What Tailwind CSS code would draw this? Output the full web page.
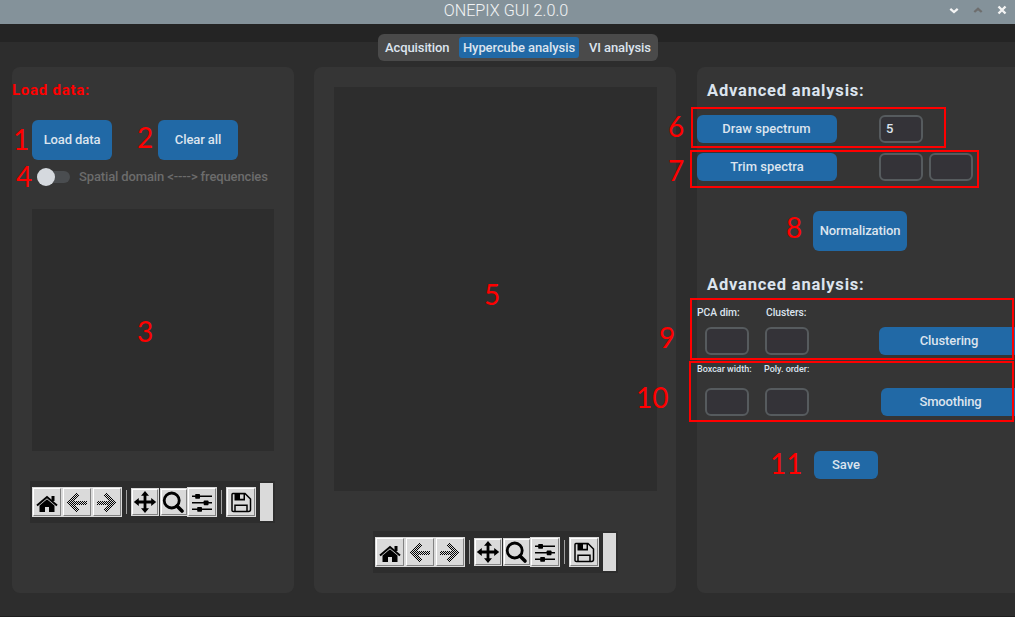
<!DOCTYPE html>
<html lang="en">
<head>
<meta charset="utf-8">
<title>ONEPIX GUI 2.0.0</title>
<script src="https://cdn.jsdelivr.net/npm/@tailwindcss/browser@4"></script>
</head>
<body class="relative flex h-[617px] w-[1015px] flex-col overflow-hidden bg-[#2d2d2d] font-['Roboto',sans-serif] text-[13px] font-medium text-[#dce4ee]">
<header class="grid h-6 shrink-0 grid-cols-[1fr_auto_1fr] items-center bg-[#84929a] pr-[7px]">
  <span></span>
  <h1 class="-translate-x-px -translate-y-px text-[16.2px] leading-none font-light text-white/90"><span class="ml-[6px]">ONEPIX GUI 2.0.0</span></h1>
  <div class="flex items-center justify-end gap-[13px] -mt-[4px]">
    <svg class="h-[10px] w-[11px]" viewBox="0 0 11 10" fill="none" stroke="#f4f4f4" stroke-width="2.3"><path d="M1.300 3.800 5 7 8.700 3.800"/></svg>
    <svg class="h-[10px] w-[11px]" viewBox="0 0 11 10" fill="none" stroke="#6e6e6e" stroke-width="2.3"><path d="M1.300 7 5 3.800 8.700 7"/></svg>
    <svg class="h-[10px] w-[11px]" viewBox="0 0 11 10" fill="none" stroke="#f4f4f4" stroke-width="2.4"><path d="M1.500 1.500 8.500 8.500M8.500 1.500 1.500 8.500"/></svg>
  </div>
</header>
<div class="h-[18px] shrink-0 bg-[#242424]"></div>
<nav class="z-10 -mt-2 ml-[378px] flex h-[27px] w-[280px] shrink-0 items-center rounded-[6px] bg-[#4a4a4a] leading-none">
  <span class="w-[81px] pl-[7px] tracking-[-0.1px]">Acquisition</span>
  <span class="flex h-[21px] w-[120px] items-center justify-center rounded-[3px] bg-[#2169a6] tracking-[-0.08px]">Hypercube analysis</span>
  <span class="flex-1 pl-[10px] tracking-[-0.1px]">VI analysis</span>
</nav>
<main class="mt-[6px] flex h-[526px] shrink-0">
  <section class="ml-3 flex w-[282px] shrink-0 flex-col rounded-lg bg-[#353535]">
    <h2 class="mt-[14px] h-[18px] text-[15px] leading-[18px] font-bold tracking-[0.75px] text-[#ff0000]">Load data:</h2>
    <div class="mt-[21px] ml-5 flex gap-[46px]">
      <button class="h-10 w-20 rounded-[6px] bg-[#2169a6] tracking-[-0.1px]">Load data</button>
      <button class="h-10 w-20 rounded-[6px] bg-[#2169a6] tracking-[-0.1px]">Clear all</button>
    </div>
    <div class="mt-[8px] ml-[25px] flex h-[18px] items-center text-[#6c6c6c]">
      <span class="flex h-3 w-[33px] items-center rounded-full bg-[#4a4d50]"><i class="size-[18px] rounded-full bg-[#d5d9de]"></i></span>
      <span class="ml-[9px] tracking-[-0.13px] whitespace-nowrap">Spatial domain &lt;----&gt; frequencies</span>
    </div>
    <div class="mt-[23px] ml-5 h-[242px] w-[242px] bg-[#2d2d2d]"></div>
    <div class="toolbar mt-[30px] ml-[18px]"></div>
  </section>
  <section class="ml-5 flex w-[362px] shrink-0 flex-col rounded-lg bg-[#353535]">
    <div class="mt-5 ml-5 h-[404px] w-[323px] bg-[#2d2d2d]"></div>
    <div class="toolbar mt-10 ml-[59px]"></div>
  </section>
  <section class="ml-[21px] flex w-[340px] shrink-0 flex-col rounded-lg bg-[#353535]">
    <h2 class="mt-[15px] ml-[10px] h-[18px] text-[16.5px] leading-[18px] font-bold tracking-[0.8px]">Advanced analysis:</h2>
    <div class="mt-[15px] flex h-7">
      <button class="w-[140px] rounded-[6px] bg-[#2169a6] pr-px tracking-[0.04px]">Draw spectrum</button>
      <span class="ml-[42px] flex w-11 items-center rounded-[6px] border-2 border-[#565b5e] bg-[#343338] pl-[5px]">5</span>
    </div>
    <div class="mt-[10px] flex h-7">
      <button class="w-[140px] rounded-[6px] bg-[#2169a6]">Trim spectra</button>
      <span class="ml-[42px] w-11 rounded-[6px] border-2 border-[#565b5e] bg-[#343338]"></span>
      <span class="ml-[6px] w-11 rounded-[6px] border-2 border-[#565b5e] bg-[#343338]"></span>
    </div>
    <button class="mt-[30px] ml-[116px] h-10 w-[94px] rounded-[6px] bg-[#2169a6] tracking-[-0.1px]">Normalization</button>
    <h2 class="mt-[25px] ml-[10px] h-[18px] text-[16.5px] leading-[18px] font-bold tracking-[0.8px]">Advanced analysis:</h2>
    <div class="mt-[13px] flex h-3 text-[10.3px] leading-3 whitespace-nowrap">
      <span class="w-[69px]">PCA dim:</span><span class="tracking-[-0.05px]">Clusters:</span>
    </div>
    <div class="mt-[8px] ml-2 flex h-7">
      <span class="w-11 rounded-[6px] border-2 border-[#565b5e] bg-[#343338]"></span>
      <span class="ml-4 w-11 rounded-[6px] border-2 border-[#565b5e] bg-[#343338]"></span>
      <button class="ml-[70px] w-[140px] rounded-[6px] bg-[#2169a6] tracking-[-0.1px]">Clustering</button>
    </div>
    <div class="mt-2 flex h-3 text-[9px] leading-3 whitespace-nowrap">
      <span class="w-[67px]">Boxcar width:</span><span>Poly. order:</span>
    </div>
    <div class="mt-[13px] ml-2 flex h-7">
      <span class="w-11 rounded-[6px] border-2 border-[#565b5e] bg-[#343338]"></span>
      <span class="ml-4 w-11 rounded-[6px] border-2 border-[#565b5e] bg-[#343338]"></span>
      <button class="ml-[72px] w-[139px] rounded-[6px] bg-[#2169a6] tracking-[-0.15px]">Smoothing</button>
    </div>
    <button class="mt-[35px] ml-[117px] h-7 w-16 rounded-[6px] bg-[#2169a6]">Save</button>
  </section>
</main>
<div class="mt-[23px] h-px shrink-0 bg-[#1e1e1e]"></div>

<!-- Numbered callouts over the window -->
<div class="pointer-events-none absolute inset-0 z-20 font-['Lato',sans-serif] text-[28px] leading-7 font-normal text-[#ff0000]">
  <span class="absolute top-[125px] left-[13px]">1</span>
  <span class="absolute top-[123px] left-[137px]">2</span>
  <span class="absolute top-[317px] left-[137px]">3</span>
  <span class="absolute top-[162px] left-[16px]">4</span>
  <span class="absolute top-[280px] left-[484px]">5</span>
  <span class="absolute top-[112px] left-[668px]">6</span>
  <span class="absolute top-[156px] left-[668px]">7</span>
  <span class="absolute top-[213px] left-[786px]">8</span>
  <span class="absolute top-[323px] left-[659px]">9</span>
  <span class="absolute top-[383px] left-[636px]">10</span>
  <span class="absolute top-[449px] left-[770px]">11</span>
  <i class="absolute top-[107px] left-[691px] h-[41px] w-[255px] border-2 border-[#ff0000]"></i>
  <i class="absolute top-[150px] left-[690px] h-[38px] w-[289px] border-2 border-[#ff0000]"></i>
  <i class="absolute top-[298px] left-[690px] h-[62px] w-[324px] border-2 border-[#ff0000]"></i>
  <i class="absolute top-[361px] left-[689px] h-[61px] w-[325px] border-2 border-[#ff0000]"></i>
</div>

<template id="toolbar">
  <div class="flex h-[42px] w-[245px] items-center bg-[#2d2d2d] pl-[2px]">
    <span class="size-[30px] bg-[#dadada] p-px"><span class="block size-[28px] border border-t-white border-l-white border-r-[#828282] border-b-[#828282]">
      <svg class="size-[26px]" viewBox="0 0 26 26"><path d="M17.500 7h3v5h-3z"/><path d="M3 16.500 13 8 23 16.500" fill="none" stroke="#000" stroke-width="2"/><path d="M5.500 16.500 13 10.300 20.500 16.500v6.500H15v-5h-4v5H5.500z"/></svg></span></span>
    <span class="size-[30px] bg-[#dadada] p-px"><span class="block size-[28px] border border-t-white border-l-white border-r-[#828282] border-b-[#828282]">
      <svg class="size-[26px]" viewBox="0 0 26 26" shape-rendering="crispEdges"><path d="M3.500 13.500 13 3.500l3 3L11 11.500h12v4H11l5 5L13 23.500z" fill="url(#dots)"/></svg></span></span>
    <span class="size-[30px] bg-[#dadada] p-px"><span class="block size-[28px] border border-t-white border-l-white border-r-[#828282] border-b-[#828282]">
      <svg class="size-[26px]" viewBox="0 0 26 26" shape-rendering="crispEdges"><path d="M22.500 13.500 13 3.500l-3 3L15 11.500H3v4h12l-5 5L13 23.500z" fill="url(#dots)"/></svg></span></span>
    <span class="ml-1 h-6 w-px bg-[#a0a0a0]"></span>
    <span class="ml-1 size-7 bg-[#dadada] p-px"><span class="block size-[26px] border border-t-white border-l-white border-r-[#828282] border-b-[#828282]">
      <svg class="size-6 overflow-visible" viewBox="0 0 24 24"><path d="M12 1l4 4.800h-2.600v4.800h4.800V8l5 4-5 4v-2.600h-4.800v4.800H16L12 23l-4-4.800h2.600v-4.800H5.800V16l-5-4 5-4v2.600h4.800V5.800H8z"/></svg></span></span>
    <span class="ml-px size-7 bg-[#dadada] p-px"><span class="block size-[26px] border border-t-white border-l-white border-r-[#828282] border-b-[#828282]">
      <svg class="size-6" viewBox="0 0 24 24" fill="none" stroke="#000"><circle cx="9.700" cy="10.500" r="7.500" stroke-width="2.800"/><path d="m15 16 5 5" stroke-width="3.600" stroke-linecap="round"/></svg></span></span>
    <span class="-ml-px size-[30px] bg-[#dadada] p-px"><span class="block size-[28px] border border-t-white border-l-white border-r-[#828282] border-b-[#828282]">
      <svg class="size-[26px]" viewBox="0 0 26 26"><path d="M3 6.600h20v1.500H3zM3 13.100h20v1.500H3zM3 19.600h20v1.500H3z"/><rect x="6.200" y="5" width="4.800" height="4.700" rx=".7"/><rect x="14.700" y="11.500" width="4.800" height="4.700" rx=".7"/><rect x="8.200" y="18" width="4.800" height="4.700" rx=".7"/></svg></span></span>
    <span class="ml-1 h-6 w-px bg-[#a0a0a0]"></span>
    <span class="ml-1 size-[30px] bg-[#dadada] p-px"><span class="block size-[28px] border border-t-white border-l-white border-r-[#828282] border-b-[#828282]">
      <svg class="size-[26px]" viewBox="0 0 26 26"><path d="M4.500 4.500H17l5.500 5.500v10.500q0 2-2 2h-15q-1.500 0-1.500-1V5.500q0-1 1-1z" fill="none" stroke="#000" stroke-width="1.500"/><path d="M6.500 4h10.500v7.500H6.500zM12 5.300v4.500h3.500V5.300z" fill-rule="evenodd"/><path d="M7 22.500v-6.200h12v6.200" fill="none" stroke="#000" stroke-width="1.500"/></svg></span></span>
    <span class="ml-1 h-[38px] w-[13px] bg-[#dadada]"></span>
  </div>
</template>
<svg class="absolute size-0"><defs><pattern id="dots" width="2" height="2" patternUnits="userSpaceOnUse"><path d="M0 0h1v1H0zM1 1h1v1H1z" fill="#000" shape-rendering="crispEdges"/></pattern></defs></svg>
<script>
document.querySelectorAll('.toolbar').forEach(el => el.append(document.getElementById('toolbar').content.cloneNode(true)));
</script>
</body>
</html>
